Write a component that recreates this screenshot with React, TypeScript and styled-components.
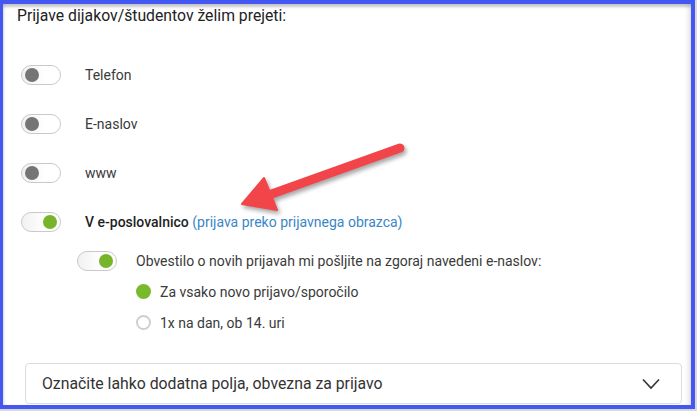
import React, { FC } from 'react'
import styled, { createGlobalStyle } from 'styled-components'

const GlobalStyle = createGlobalStyle`
  html, body {
    margin: 0;
    padding: 0;
    background: #e6e6e6;
  }
  body {
    font-family: Roboto, 'Liberation Sans', sans-serif;
    color: #333;
  }
`

const Screen = styled.div`
  position: relative;
  width: 697px;
  height: 411px;
  background: #d9d9d9;
`

const Frame = styled.div`
  box-sizing: border-box;
  width: 695px;
  height: 409px;
  border: 4px solid #4357f2;
  border-left-width: 3px;
  background: #fff;
  box-shadow: inset 0 4px 3px -1px rgba(0, 0, 0, 0.22), inset 3px 0 3px -2px rgba(0, 0, 0, 0.12),
    inset -5px 0 4px -2px rgba(0, 0, 0, 0.1);
  padding: 2px 9px 0 14px;
  display: flex;
  flex-direction: column;
`

const Title = styled.div`
  font-size: 15.75px;
  line-height: 20px;
  color: #222;
`

const List = styled.div`
  margin-top: 24px;
  display: flex;
  flex-direction: column;
`

const Row = styled.div<{ $h: number; $indent?: number }>`
  height: ${(p) => p.$h}px;
  display: flex;
  align-items: center;
  padding-left: ${(p) => p.$indent ?? 4}px;
`

const Track = styled.div<{ $on?: boolean }>`
  box-sizing: border-box;
  width: 40px;
  height: 20px;
  border: 1px solid #c9c9c9;
  border-radius: 10px;
  background: linear-gradient(to right, #f1f1f1, #fff 60%);
  display: flex;
  align-items: center;
  justify-content: ${(p) => (p.$on ? 'flex-end' : 'flex-start')};
  padding: 0 3px;
  flex-shrink: 0;
`

const Knob = styled.div<{ $on?: boolean }>`
  width: 14px;
  height: 14px;
  border-radius: 50%;
  background: ${(p) => (p.$on ? '#76b52a' : '#757575')};
`

const Label = styled.span<{ $gap: number }>`
  margin-left: ${(p) => p.$gap}px;
  font-size: 14px;
  color: #3a3a3a;
  white-space: nowrap;
`

const Strong = styled.b`
  font-weight: 500;
  color: #1f1f1f;
`

const Hint = styled.span`
  color: #3b86c6;
`

const Radio = styled.div<{ $on?: boolean }>`
  box-sizing: border-box;
  width: 15px;
  height: 15px;
  border-radius: 50%;
  flex-shrink: 0;
  background: ${(p) => (p.$on ? '#7ab82c' : '#fff')};
  border: ${(p) => (p.$on ? 'none' : '2px solid #cfcfcf')};
`

const Accordion = styled.div`
  box-sizing: border-box;
  margin: 25px 0 0 8px;
  height: 41px;
  border: 1px solid #dcdcdc;
  border-radius: 4px;
  display: flex;
  align-items: center;
  justify-content: space-between;
  padding: 0 21px 0 16px;
  font-size: 15.8px;
  color: #333;
`

const Arrow = styled.svg`
  position: absolute;
  left: 0;
  top: 0;
  pointer-events: none;
  filter: drop-shadow(2px 3px 2px rgba(0, 0, 0, 0.35));
`

interface ToggleProps {
  on?: boolean
}

const Toggle: FC<ToggleProps> = ({ on }) => (
  <Track $on={on}>
    <Knob $on={on} />
  </Track>
)

const App: FC = () => {
  return (
    <Screen>
      <GlobalStyle />
      <Frame>
        <Title>Prijave dijakov/študentov želim prejeti:</Title>
        <List>
          <Row $h={49}>
            <Toggle />
            <Label $gap={24}>Telefon</Label>
          </Row>
          <Row $h={49}>
            <Toggle />
            <Label $gap={24}>E-naslov</Label>
          </Row>
          <Row $h={49}>
            <Toggle />
            <Label $gap={24}>www</Label>
          </Row>
          <Row $h={49}>
            <Toggle on />
            <Label $gap={24}>
              <Strong>V e-poslovalnico</Strong> <Hint>(prijava preko prijavnega obrazca)</Hint>
            </Label>
          </Row>
          <Row $h={30} $indent={60}>
            <Toggle on />
            <Label $gap={19}>Obvestilo o novih prijavah mi pošljite na zgoraj navedeni e-naslov:</Label>
          </Row>
          <Row $h={31} $indent={119}>
            <Radio $on />
            <Label $gap={9}>Za vsako novo prijavo/sporočilo</Label>
          </Row>
          <Row $h={31} $indent={119}>
            <Radio />
            <Label $gap={9}>1x na dan, ob 14. uri</Label>
          </Row>
        </List>
        <Accordion>
          <span>Označite lahko dodatna polja, obvezna za prijavo</span>
          <svg width="18" height="12" viewBox="0 0 18 12">
            <path d="M1 1.5 L9 10 L17 1.5" fill="none" stroke="#333" strokeWidth="1.6" />
          </svg>
        </Accordion>
      </Frame>
      <Arrow width="697" height="411" viewBox="0 0 697 411">
        <line x1="400" y1="148" x2="266" y2="196" stroke="#f2454a" strokeWidth="9" strokeLinecap="round" />
        <polygon points="242,204 264,178 277,210" fill="#f2454a" stroke="#f2454a" strokeWidth="2" strokeLinejoin="round" />
      </Arrow>
    </Screen>
  )
}

export default App
